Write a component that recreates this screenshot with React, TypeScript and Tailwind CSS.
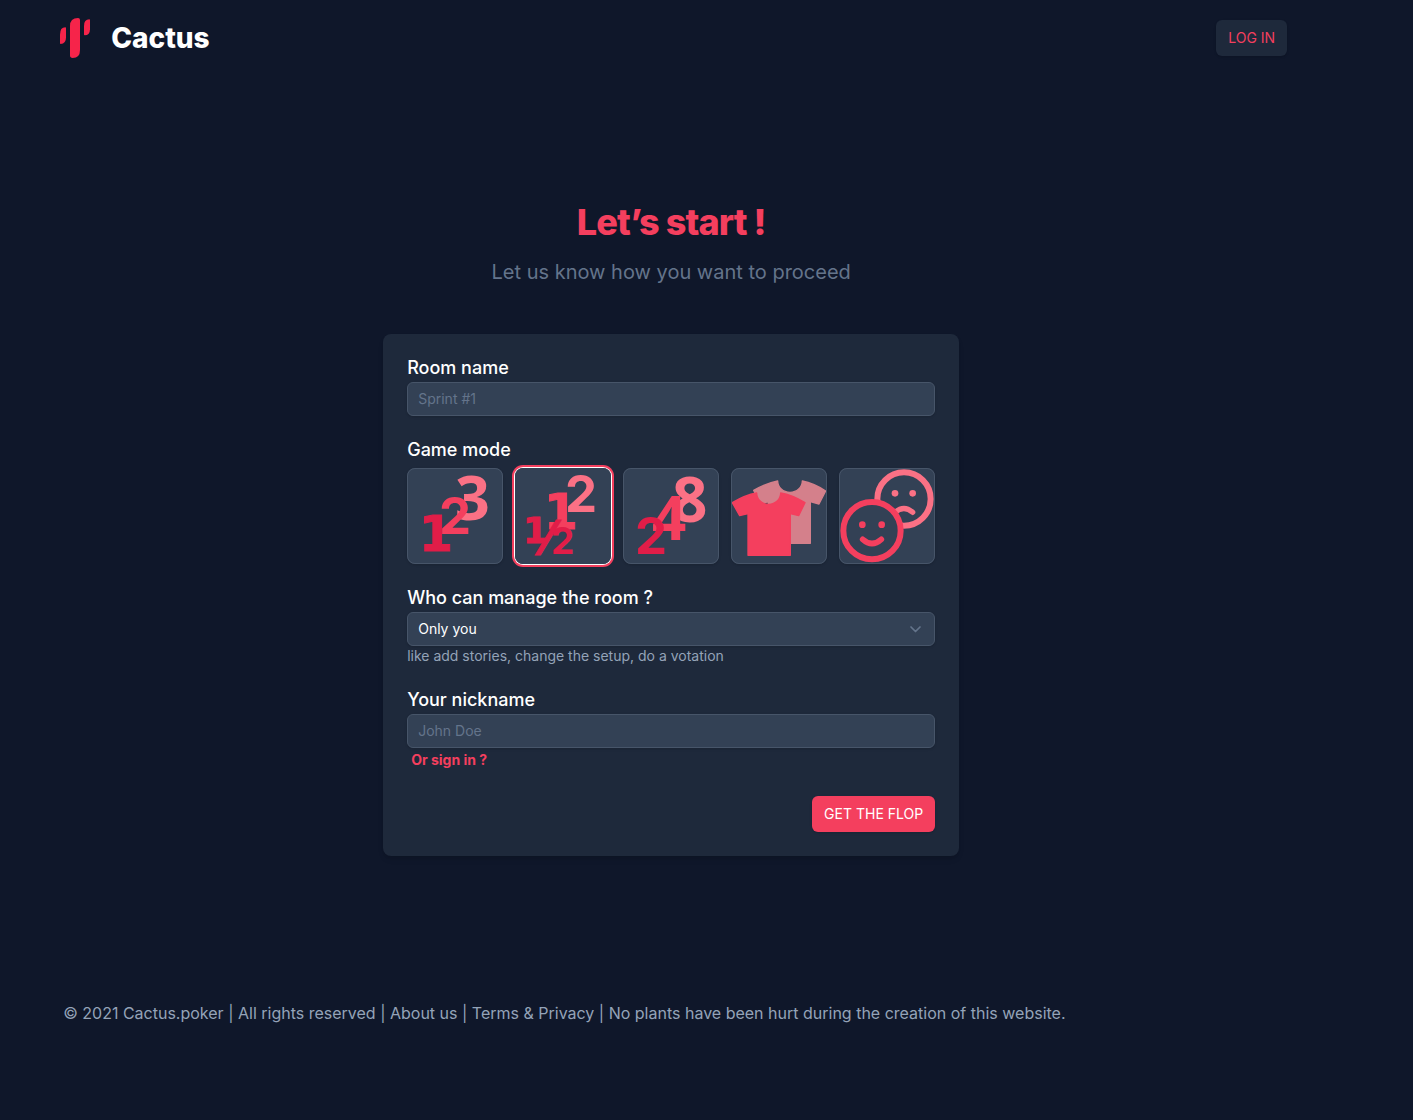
import { useState } from 'react'
import type { ReactNode } from 'react'

const Logo = () => (
  <svg viewBox="0 0 120 120" className="h-10 w-10" fill="#f6244a" aria-hidden="true">
    <path d="M15 50 Q15 28 31 28 Q33 28 33 31 V58 Q33 78 17 78 Q15 78 15 75 Z" />
    <path d="M45 24 Q45 0 69 0 Q75 0 75 6 V96 Q75 120 53 120 Q45 120 45 112 Z" />
    <path d="M87 24 Q87 4 103 4 Q105 4 105 7 V34 Q105 52 89 52 Q87 52 87 49 Z" />
  </svg>
)

const tileIcon = 'h-full w-full overflow-visible'

const Linear = () => (
  <svg viewBox="0 0 96 96" className={tileIcon} aria-hidden="true">
    <g fontFamily="Inter" fontWeight="700">
      <text x="48" y="52" fontSize="61" fontFamily="'Open Sans'" fill="#fb7185">3</text>
      <text x="32" y="66" fontSize="51" fill="#f43f5e">2</text>
      <text x="12" y="83" fontSize="49" fontFamily="'DejaVu Sans'" fill="#e11d48" stroke="#e11d48">1</text>
    </g>
  </svg>
)

const Half = () => (
  <svg viewBox="0 0 96 96" className={tileIcon} aria-hidden="true">
    <g fontFamily="Inter" fontWeight="700">
      <text x="50" y="44" fontSize="51" fill="#fb7185">2</text>
      <text x="29" y="61" fontSize="49" fontFamily="'DejaVu Sans'" fill="#f43f5e" stroke="#f43f5e">1</text>
      <g fontFamily="'DejaVu Sans'" fill="#e11d48" stroke="#e11d48">
        <text x="8" y="75" fontSize="36">1</text>
        <text x="33" y="86" fontSize="46" textAnchor="middle">⁄</text>
        <text x="36" y="86" fontSize="37" fontFamily="Inter" strokeWidth="0">2</text>
      </g>
    </g>
  </svg>
)

const Power = () => (
  <svg viewBox="0 0 96 96" className={tileIcon} aria-hidden="true">
    <g fontFamily="'Open Sans'" fontWeight="700">
      <text x="49" y="54" fontSize="62" fill="#fb7185">8</text>
      <text x="29" y="72" fontSize="60" fill="#f43f5e">4</text>
      <text x="12" y="86" fontSize="51" fontFamily="Inter" fill="#e11d48">2</text>
    </g>
  </svg>
)

const Shirts = () => (
  <svg viewBox="0 0 288 288" className={tileIcon} strokeWidth="4" strokeLinejoin="round" aria-hidden="true">
    <path
      fill="#d4808b"
      stroke="#d4808b"
      d="M68 67 Q105 46 140 39 A37 34 0 0 0 214 39 Q249 46 284 69 L264 108 L238 101 V226 H112 V101 L87 108 Z"
    />
    <path
      fill="#f43f5e"
      stroke="#f43f5e"
      d="M4 104 Q42 81 77 75 A36 34 0 0 0 149 75 Q184 81 222 104 L203 143 L178 137 V262 H51 V137 L26 143 Z"
    />
  </svg>
)

const Smileys = () => (
  <svg viewBox="0 0 288 288" className={tileIcon} fill="none" strokeLinecap="round" aria-hidden="true">
    <circle cx="195" cy="93" r="80" stroke="#fb7185" strokeWidth="18" />
    <circle cx="168" cy="76" r="10" fill="#fb7185" />
    <circle cx="221" cy="76" r="10" fill="#fb7185" />
    <path d="M168 133 Q195 110 221 133" stroke="#fb7185" strokeWidth="16" />
    <circle cx="99" cy="188" r="86" fill="#334155" stroke="#f43f5e" strokeWidth="18" />
    <circle cx="70" cy="170" r="10" fill="#f43f5e" />
    <circle cx="128" cy="170" r="10" fill="#f43f5e" />
    <path d="M71 214 Q99 239 127 214" stroke="#f43f5e" strokeWidth="17" />
  </svg>
)

const modes: { id: string; label: string; icon: ReactNode }[] = [
  { id: 'linear', label: '1, 2, 3', icon: <Linear /> },
  { id: 'half', label: '½, 1, 2', icon: <Half /> },
  { id: 'power', label: '2, 4, 8', icon: <Power /> },
  { id: 'shirts', label: 'T-shirt sizes', icon: <Shirts /> },
  { id: 'smileys', label: 'Smileys', icon: <Smileys /> },
]

const labelClass = 'block text-lg leading-5 font-medium text-white'
const fieldClass =
  'block w-full appearance-none rounded-md border border-[#475569] bg-[#334155] px-2.5 py-1.5 text-sm text-white shadow-sm placeholder:text-[#64748b]'

const Header = () => (
  <header className="flex items-center justify-between px-6 py-[18px]">
    <a href="#" className="flex items-center gap-4">
      <Logo />
      <span className="text-[28px] leading-10 font-extrabold text-white">Cactus</span>
    </a>
    <button type="button" className="rounded-md bg-[#1e293b] px-3 py-2 text-sm text-[#f43f5e] shadow-sm">
      LOG IN
    </button>
  </header>
)

const RoomForm = () => {
  const [mode, setMode] = useState('half')

  return (
    <form className="mx-auto mt-12 max-w-xl space-y-6 rounded-lg bg-[#1e293b] p-6 shadow-md">
      <div>
        <label htmlFor="room" className={labelClass}>Room name</label>
        <input id="room" type="text" placeholder="Sprint #1" className={`mt-1 ${fieldClass}`} />
      </div>

      <fieldset>
        <legend className={labelClass}>Game mode</legend>
        <div className="mt-2 grid grid-cols-5 gap-3">
          {modes.map((m) => (
            <label
              key={m.id}
              className="relative aspect-square rounded-lg bg-[#334155] shadow-sm outline-1 -outline-offset-1 outline-[#475569] has-checked:outline-[#334155] has-checked:ring-2 has-checked:ring-[#f43f5e] has-checked:ring-offset-1 has-checked:ring-offset-white"
            >
              <input
                type="radio"
                name="mode"
                value={m.id}
                aria-label={m.label}
                checked={mode === m.id}
                onChange={() => setMode(m.id)}
                className="sr-only"
              />
              {m.icon}
            </label>
          ))}
        </div>
      </fieldset>

      <div>
        <label htmlFor="manager" className={labelClass}>Who can manage the room ?</label>
        <div className="relative mt-1">
          <select id="manager" className={fieldClass}>
            <option>Only you</option>
            <option>Everybody</option>
          </select>
          <div className="pointer-events-none absolute inset-y-0 right-2.5 flex items-center">
            <svg
              viewBox="0 0 20 20"
              className="h-5 w-5 stroke-[#64748b]"
              fill="none"
              strokeWidth="1.7"
              strokeLinecap="round"
              strokeLinejoin="round"
              aria-hidden="true"
            >
              <path d="M6 8l4.5 4.5L15 8" />
            </svg>
          </div>
        </div>
        <p className="text-sm text-[#94a3b8]">like add stories, change the setup, do a votation</p>
      </div>

      <div>
        <label htmlFor="nickname" className={labelClass}>Your nickname</label>
        <input id="nickname" type="text" placeholder="John Doe" className={`mt-1 ${fieldClass}`} />
        <a href="#" className="ml-1 block text-sm leading-6 font-bold text-[#f43f5e]">Or sign in ?</a>
      </div>

      <div className="flex justify-end">
        <button type="button" className="rounded-md bg-[#f43f5e] px-3 py-2 text-sm text-white shadow-sm">
          GET THE FLOP
        </button>
      </div>
    </form>
  )
}

const App = () => {
  return (
    <div className="min-h-screen bg-[#0f172a] font-[Inter,sans-serif]">
      <div className="w-[95%]">
        <div className="mx-auto max-w-7xl">
          <Header />
          <main className="px-8 pt-[126px] text-center">
            <h1 className="text-4xl font-extrabold tracking-tight text-[#f43f5e]">Let’s start !</h1>
            <p className="mt-4 text-xl text-[#64748b]">Let us know how you want to proceed</p>
            <div className="text-left">
              <RoomForm />
            </div>
          </main>
          <footer className="mt-[145px] px-8 text-[#94a3b8]">
            © 2021 Cactus.poker | All rights reserved | <a href="#">About us</a> | <a href="#">Terms &amp; Privacy</a> | No
            plants have been hurt during the creation of this website.
          </footer>
        </div>
      </div>
    </div>
  )
}

export default App
